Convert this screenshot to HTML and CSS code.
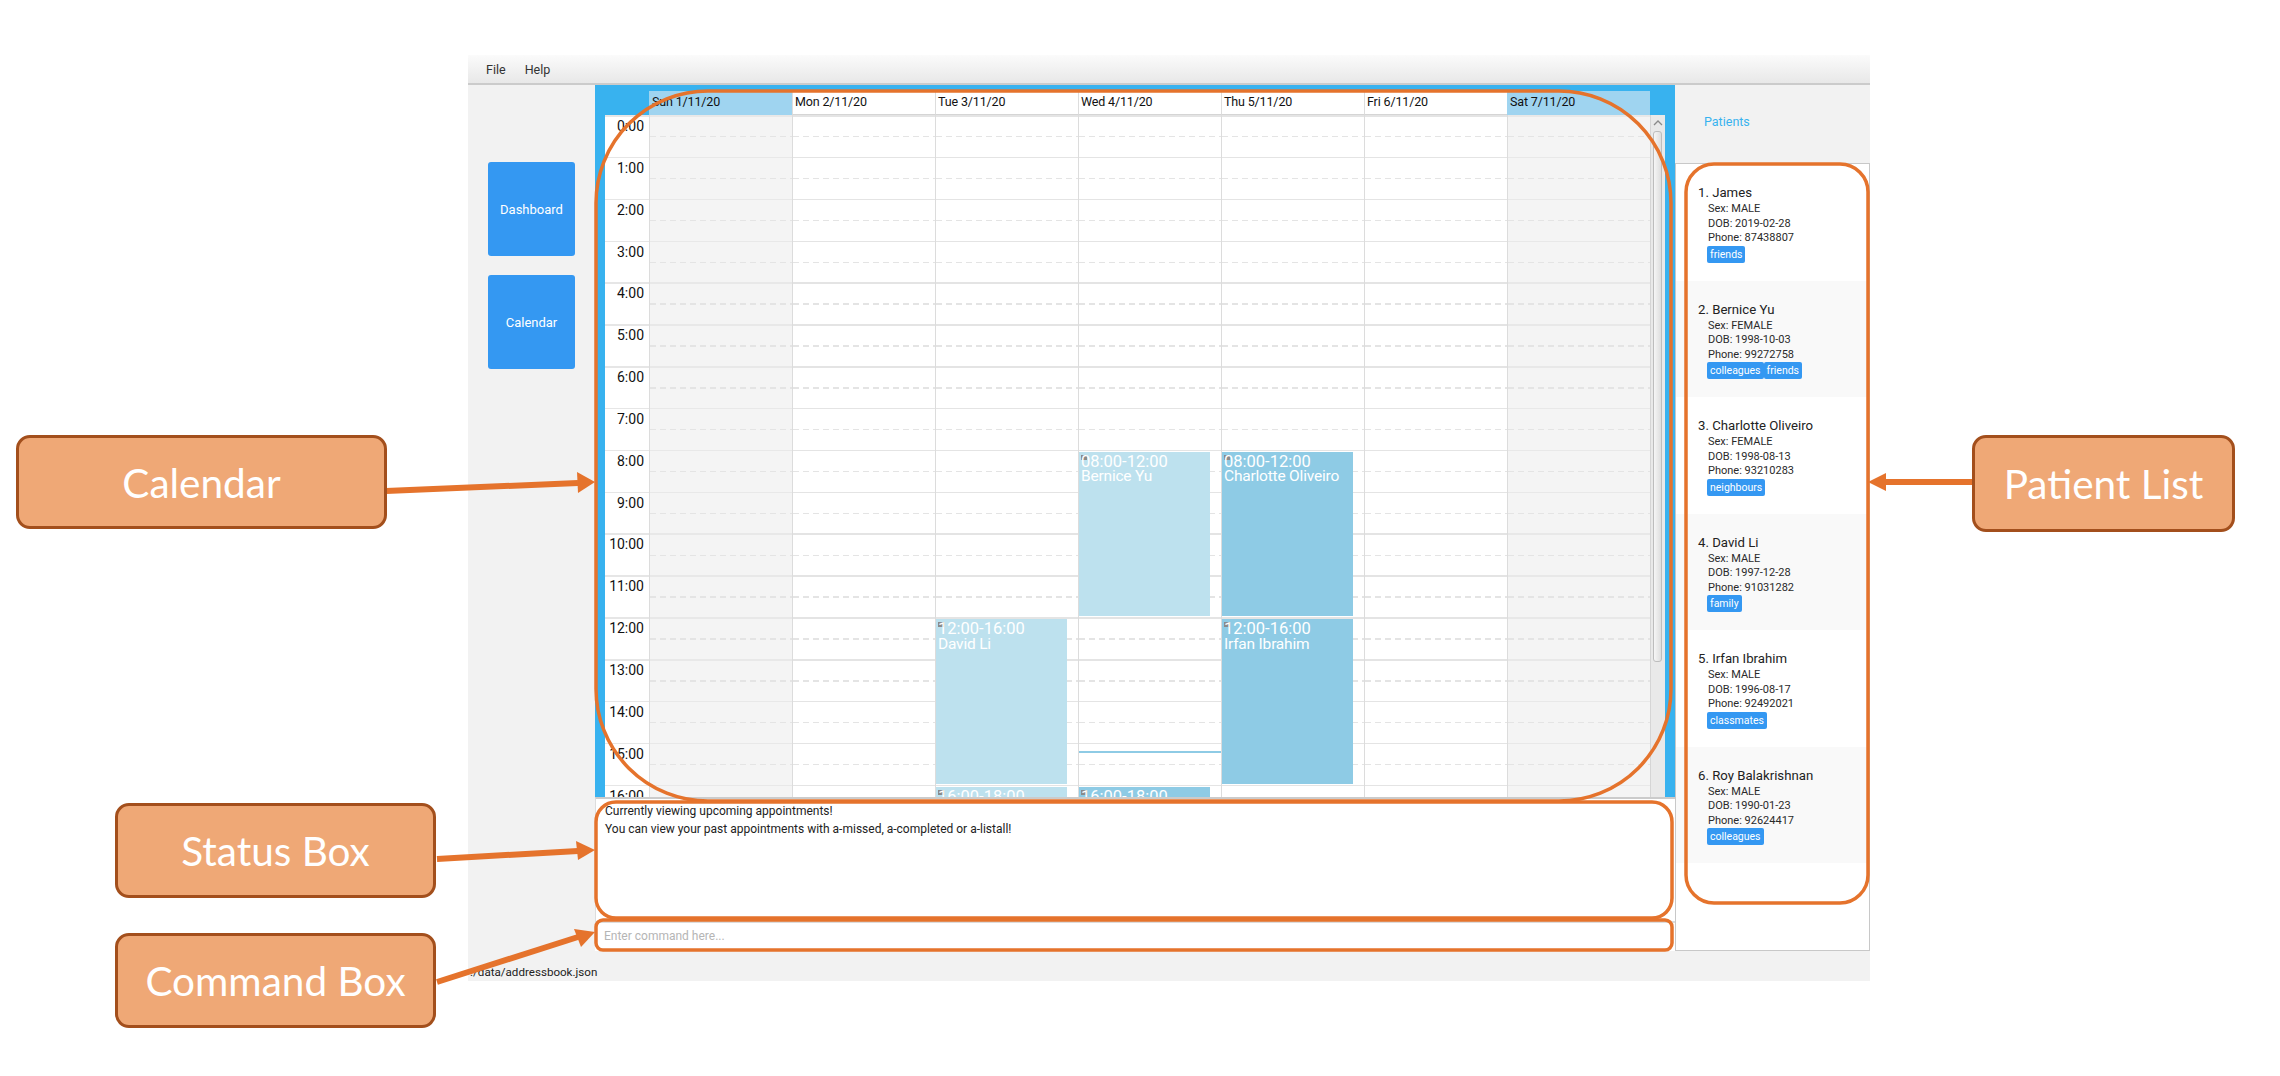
FILE: index.html
```html
<!DOCTYPE html>
<html lang="en">
<head>
  <meta charset="UTF-8">
  <title>Patient Calendar UI</title>
  <link rel="stylesheet" href="styles.css">
</head>
<body>
  <div class="window">
    <div class="menubar">
      <span>File</span>
      <span>Help</span>
    </div>
    <div class="main">
      <div class="sidebar">
        <div class="nav-btn">Dashboard</div>
        <div class="nav-btn">Calendar</div>
      </div>
      <div class="center">
        <div class="calendar">
          <div class="cal-head">
            <div class="head-cell weekend">Sun 1/11/20</div>
            <div class="head-cell">Mon 2/11/20</div>
            <div class="head-cell">Tue 3/11/20</div>
            <div class="head-cell">Wed 4/11/20</div>
            <div class="head-cell">Thu 5/11/20</div>
            <div class="head-cell">Fri 6/11/20</div>
            <div class="head-cell weekend">Sat 7/11/20</div>
          </div>
          <div class="cal-body">
            <div class="times">
              <div>0:00</div><div>1:00</div><div>2:00</div><div>3:00</div>
              <div>4:00</div><div>5:00</div><div>6:00</div><div>7:00</div>
              <div>8:00</div><div>9:00</div><div>10:00</div><div>11:00</div>
              <div>12:00</div><div>13:00</div><div>14:00</div><div>15:00</div>
              <div>16:00</div>
            </div>
            <div class="day weekend"></div>
            <div class="day"></div>
            <div class="day">
              <div class="event light" style="--start:12;--len:4"><div class="when">12:00-16:00</div>David Li</div>
              <div class="event light" style="--start:16;--len:2"><div class="when">16:00-18:00</div></div>
            </div>
            <div class="day">
              <div class="event light" style="--start:8;--len:4"><div class="when">08:00-12:00</div>Bernice Yu</div>
              <div class="now-line"></div>
              <div class="event dark" style="--start:16;--len:2"><div class="when">16:00-18:00</div></div>
            </div>
            <div class="day">
              <div class="event dark" style="--start:8;--len:4"><div class="when">08:00-12:00</div>Charlotte Oliveiro</div>
              <div class="event dark" style="--start:12;--len:4"><div class="when">12:00-16:00</div>Irfan Ibrahim</div>
            </div>
            <div class="day"></div>
            <div class="day weekend"></div>
            <div class="scrollbar">
              <svg class="scroll-up" width="10" height="6" viewBox="0 0 10 6"><path d="M1 5 L5 1 L9 5" fill="none" stroke="#8a8a8a" stroke-width="1.3"/></svg>
              <div class="scroll-thumb"></div>
            </div>
          </div>
        </div>
        <div class="status">
          <div>Currently viewing upcoming appointments!</div>
          <div>You can view your past appointments with a-missed, a-completed or a-listall!</div>
        </div>
        <div class="command">Enter command here...</div>
      </div>
      <div class="patients">
        <div class="patients-title">Patients</div>
        <div class="patient-list">
          <div class="card">
            <div class="name">1. James</div>
            <div class="info">Sex: MALE</div>
            <div class="info">DOB: 2019-02-28</div>
            <div class="info">Phone: 87438807</div>
            <div class="tags"><span>friends</span></div>
          </div>
          <div class="card">
            <div class="name">2. Bernice Yu</div>
            <div class="info">Sex: FEMALE</div>
            <div class="info">DOB: 1998-10-03</div>
            <div class="info">Phone: 99272758</div>
            <div class="tags"><span>colleagues</span><span>friends</span></div>
          </div>
          <div class="card">
            <div class="name">3. Charlotte Oliveiro</div>
            <div class="info">Sex: FEMALE</div>
            <div class="info">DOB: 1998-08-13</div>
            <div class="info">Phone: 93210283</div>
            <div class="tags"><span>neighbours</span></div>
          </div>
          <div class="card">
            <div class="name">4. David Li</div>
            <div class="info">Sex: MALE</div>
            <div class="info">DOB: 1997-12-28</div>
            <div class="info">Phone: 91031282</div>
            <div class="tags"><span>family</span></div>
          </div>
          <div class="card">
            <div class="name">5. Irfan Ibrahim</div>
            <div class="info">Sex: MALE</div>
            <div class="info">DOB: 1996-08-17</div>
            <div class="info">Phone: 92492021</div>
            <div class="tags"><span>classmates</span></div>
          </div>
          <div class="card">
            <div class="name">6. Roy Balakrishnan</div>
            <div class="info">Sex: MALE</div>
            <div class="info">DOB: 1990-01-23</div>
            <div class="info">Phone: 92624417</div>
            <div class="tags"><span>colleagues</span></div>
          </div>
        </div>
      </div>
    </div>
    <div class="statusbar">./data/addressbook.json</div>
  </div>

  <!-- annotations drawn over the screenshot -->
  <svg class="marks" width="2280" height="1076" viewBox="0 0 2280 1076">
    <rect class="outline" x="596" y="91" width="1075" height="710" rx="112"/>
    <rect class="outline" x="596" y="802" width="1076" height="116" rx="20"/>
    <rect class="outline" x="596" y="920" width="1076" height="30" rx="7"/>
    <rect class="outline" x="1686" y="164" width="182" height="739" rx="28"/>
    <line class="arrow" x1="386" y1="491" x2="578" y2="483"/>
    <polygon class="head" points="595,482 577,472 578,493"/>
    <line class="arrow" x1="437" y1="859" x2="578" y2="851"/>
    <polygon class="head" points="595,850 576,841 578,860"/>
    <line class="arrow" x1="437" y1="982" x2="578" y2="937"/>
    <polygon class="head" points="595,932 574,929 581,947"/>
    <line class="arrow" x1="1972" y1="482" x2="1885" y2="482"/>
    <polygon class="head" points="1868,482 1886,473 1886,491"/>
  </svg>
  <div class="callout callout-calendar">Calendar</div>
  <div class="callout callout-status">Status Box</div>
  <div class="callout callout-command">Command Box</div>
  <div class="callout callout-patients">Patient List</div>
</body>
</html>
```

FILE: styles.css
```css
body {
  margin: 0;
  height: 1076px;
  overflow: hidden;
  background: #fff;
  font-family: Roboto, sans-serif;
  color: #222;
}
.window {
  width: 1402px;
  margin: 55px 0 0 468px;
  background: #f2f2f2;
}
.menubar {
  height: 28px;
  display: flex;
  align-items: center;
  gap: 19px;
  padding-left: 18px;
  font-size: 12.5px;
  color: #333;
  background: linear-gradient(#fbfbfb, #e8e8e8);
  border-bottom: 2px solid #cbcbcb;
}
.main {
  display: flex;
  height: 866px;
}
.sidebar {
  width: 127px;
  padding: 77px 0 0 20px;
  box-sizing: border-box;
  display: flex;
  flex-direction: column;
  gap: 19px;
}
.nav-btn {
  width: 87px;
  height: 94px;
  display: flex;
  align-items: center;
  justify-content: center;
  background: #3498f2;
  border-radius: 3px;
  color: #fff;
  font-size: 13px;
}
.center {
  width: 1080px;
  display: flex;
  flex-direction: column;
}
.calendar {
  height: 712px;
  box-sizing: border-box;
  padding: 6px 10px 0 10px;
  background: #38b2ef;
  overflow: hidden;
}
.cal-head {
  display: flex;
  height: 24px;
  margin-left: 44px;
}
.head-cell {
  width: 143px;
  box-sizing: border-box;
  padding: 3px 0 0 2px;
  background: #fff;
  border-left: 1px solid #ddd;
  border-bottom: 1px solid #d5d5d5;
  font-size: 12.5px;
  letter-spacing: -0.15px;
  color: #111;
}
.head-cell.weekend {
  background: #9fd4f0;
  border-color: #9fd4f0;
}
.cal-body {
  display: flex;
  height: 700px;
}
.times {
  width: 44px;
  flex: none;
  background: repeating-linear-gradient(#e6e6e6 0 1.5px, #fff 1.5px 41.85px);
}
.times div {
  height: 41.85px;
  box-sizing: border-box;
  padding: 3px 5px 0 0;
  text-align: right;
  font-size: 14px;
  line-height: 16px;
  color: #111;
}
.day {
  position: relative;
  width: 143px;
  flex: none;
  box-sizing: border-box;
  border-left: 1px solid #dcdcdc;
  background: repeating-linear-gradient(#e4e4e4 0 1.5px, #fff 1.5px 41.85px);
}
.day.weekend {
  background: repeating-linear-gradient(#e8e8e8 0 1.5px, #f4f4f4 1.5px 41.85px);
}
/* half hour dashes */
.day::before {
  content: "";
  position: absolute;
  inset: 0;
  background: repeating-linear-gradient(90deg, #e4e4e4 0 6px, transparent 6px 10px);
  -webkit-mask-image: repeating-linear-gradient(transparent 0 21px, #000 21px 22.5px, transparent 22.5px 41.85px);
  mask-image: repeating-linear-gradient(transparent 0 21px, #000 21px 22.5px, transparent 22.5px 41.85px);
}
.event {
  position: absolute;
  left: 0;
  width: 131px;
  top: calc(var(--start) * 41.85px + 2px);
  height: calc(var(--len) * 41.85px - 3px);
  padding: 2px 0 0 2px;
  box-sizing: border-box;
  color: #fff;
  font-size: 15.5px;
  line-height: 15.5px;
  letter-spacing: -0.2px;
  /* small grey marker in the corner, under the text */
  background-image: linear-gradient(#8a8a8a, #8a8a8a);
  background-repeat: no-repeat;
  background-position: 2px 3px;
  background-size: 6px 5px;
}
.when {
  font-size: 16.5px;
  letter-spacing: 0;
}
.event.light {
  background-color: #bde1ee;
}
.event.dark {
  background-color: #8ecbe5;
}
.now-line {
  position: absolute;
  left: 0;
  right: 0;
  top: 636px;
  height: 2px;
  background: #8ecbe5;
}
.scrollbar {
  width: 15px;
  flex: none;
  box-sizing: border-box;
  padding: 5px 3px 0 2px;
  background: #e9e9e9;
  border-left: 1px solid #d5d5d5;
}
.scroll-up {
  display: block;
  margin-bottom: 5px;
}
.scroll-thumb {
  height: 531px;
  box-sizing: border-box;
  background: linear-gradient(90deg, #f6f6f6, #dedede);
  border: 1px solid #bdbdbd;
  border-radius: 3px;
}
.status {
  height: 124px;
  box-sizing: border-box;
  padding: 4px 0 0 9px;
  background: #fff;
  border-top: 2px solid #cbcbcb;
  border-left: 1px solid #ddd;
  font-size: 12px;
  line-height: 17.5px;
  color: #222;
}
.command {
  height: 30px;
  box-sizing: border-box;
  padding: 5px 0 0 9px;
  background: #fff;
  border-top: 2px solid #dcdcdc;
  font-size: 12px;
  line-height: 17px;
  color: #b5b5b5;
}
.patients {
  width: 195px;
  display: flex;
  flex-direction: column;
}
.patients-title {
  height: 78px;
  box-sizing: border-box;
  padding: 29px 0 0 29px;
  font-size: 12.5px;
  color: #38b2ef;
}
.patient-list {
  flex: 1;
  box-sizing: border-box;
  background: #fff;
  border: 1px solid #c8c8c8;
}
.card {
  height: 116.5px;
  box-sizing: border-box;
  padding: 20px 0 0 22px;
}
.card:nth-child(even) {
  background: #f9f9f9;
}
.name {
  font-size: 13.2px;
  line-height: 17px;
  margin-bottom: 1px;
  color: #222;
}
.info {
  padding-left: 10px;
  font-size: 11px;
  line-height: 14.5px;
  color: #2a2a2a;
}
.tags {
  display: flex;
  padding-left: 9px;
}
.tags span {
  padding: 0 3px;
  height: 17px;
  line-height: 17px;
  font-size: 10.5px;
  background: #3498f2;
  border-radius: 2px;
  color: #fff;
}
.statusbar {
  height: 30px;
  box-sizing: border-box;
  padding: 14px 0 0 2px;
  font-size: 11.6px;
  line-height: 15px;
  color: #222;
}
.marks {
  position: absolute;
  left: 0;
  top: 0;
}
.outline {
  fill: none;
  stroke: #e5732c;
  stroke-width: 3.5;
}
.arrow {
  stroke: #e5732c;
  stroke-width: 6;
}
.head {
  fill: #e5732c;
}
.callout {
  position: absolute;
  left: 115px;
  width: 321px;
  height: 95px;
  box-sizing: border-box;
  display: flex;
  align-items: center;
  justify-content: center;
  background: #efa876;
  border: 3px solid #a34f1c;
  border-radius: 14px;
  color: #fff;
  font-family: Lato, sans-serif;
  font-size: 40.5px;
}
.callout-calendar {
  left: 16px;
  top: 435px;
  width: 371px;
  height: 94px;
}
.callout-status {
  top: 803px;
}
.callout-command {
  top: 933px;
}
.callout-patients {
  left: 1972px;
  top: 435px;
  width: 263px;
  height: 97px;
}
```
